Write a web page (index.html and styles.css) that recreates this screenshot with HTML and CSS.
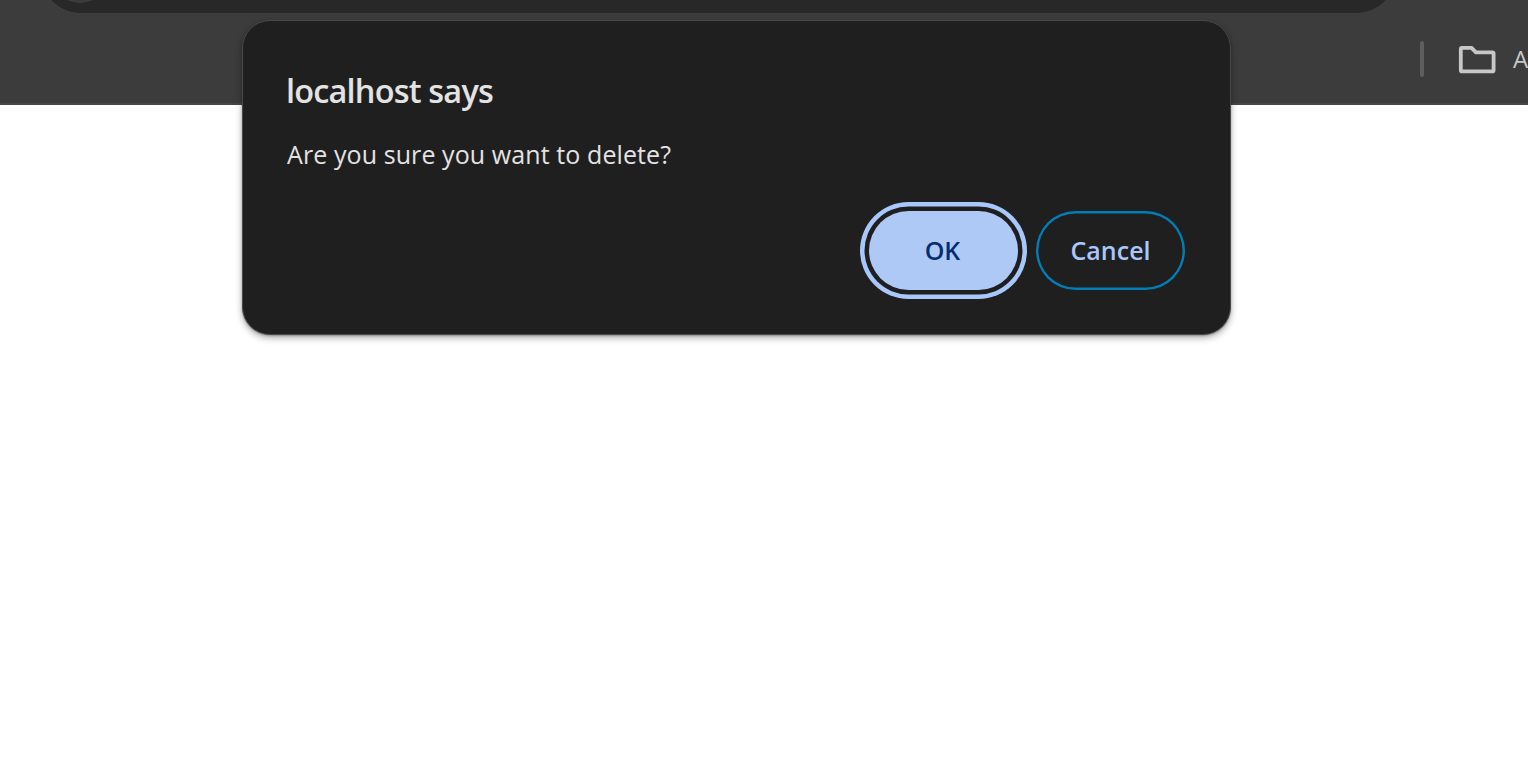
FILE: index.html
```html
<!DOCTYPE html>
<html lang="en">
<head>
<meta charset="utf-8">
<title>localhost</title>
<link rel="stylesheet" href="styles.css">
</head>
<body>
<header class="toolbar">
  <div class="omnibox"><span class="site-info"></span></div>
  <div class="bookmarks">
    <span class="divider"></span>
    <svg class="folder" width="38" height="28" viewBox="0 0 38 28" fill="none" stroke="#c7c7c7" stroke-width="3.8" stroke-linejoin="round"><path d="M4 1.8H13.5L18 6.4H34.4Q35.6 6.4 35.6 7.6V24.2Q35.6 25.4 34.4 25.4H4Q2.8 25.4 2.8 24.2V3Q2.8 1.8 4 1.8Z"/></svg>
    <span class="bookmark-label">A</span>
  </div>
</header>
<section class="dialog" role="dialog">
  <h1 class="title">localhost says</h1>
  <p class="message">Are you sure you want to delete?</p>
  <div class="actions">
    <button class="button ok">OK</button>
    <button class="button cancel">Cancel</button>
  </div>
</section>
</body>
</html>
```
FILE: styles.css
```css
* { box-sizing: border-box; }
body {
  margin: 0;
  height: 780px;
  overflow: hidden;
  background: #fff;
  font-family: "Open Sans", "Noto Sans", sans-serif;
}
.toolbar {
  height: 105px;
  background: #3c3c3c;
  border-bottom: 2px solid #474546;
  overflow: hidden;
}
.omnibox {
  width: 1353px;
  height: 76px;
  margin: -63px 0 0 42px;
  padding: 10px;
  border-radius: 38px;
  background: #282828;
}
.site-info {
  display: block;
  width: 56px;
  height: 56px;
  border-radius: 50%;
  background: #3c3c3c;
}
.bookmarks {
  display: flex;
  align-items: center;
  height: 92px;
  padding-left: 1420px;
}
.divider {
  flex: none;
  width: 4px;
  height: 36px;
  border-radius: 2px;
  background: #5e5e5e;
}
.folder { flex: none; margin: 2px 0 0 34px; }
.bookmark-label {
  margin: 0 0 0 17px;
  font-size: 24px;
  line-height: 32px;
  color: #c7c7c7;
}
.dialog {
  position: absolute;
  left: 242px;
  top: 20px;
  width: 989px;
  height: 315px;
  padding: 48px 45px 0 43px;
  border: 1px solid #4a4a4a;
  border-radius: 28px;
  background: #1f1f1f;
  box-shadow: 0 3px 7px rgba(0, 0, 0, .32), 0 1px 2px rgba(0, 0, 0, .25);
  color: #e3e3e3;
}
.title {
  margin: 0;
  font-size: 32.5px;
  line-height: 44px;
  font-weight: 600;
  letter-spacing: -.82px;
}
.message {
  margin: 23px 0 0 1px;
  font-size: 25px;
  line-height: 36px;
  letter-spacing: .09px;
}
.actions {
  display: flex;
  justify-content: flex-end;
  gap: 18px;
  margin-top: 39px;
}
.button {
  width: 149px;
  height: 79px;
  padding: 0 0 2px;
  border: 0;
  border-radius: 40px;
  font: 600 25px/36px "Open Sans", "Noto Sans", sans-serif;
}
.ok {
  padding-right: 2px;
  background: #afc9f7;
  color: #062e6f;
  box-shadow: 0 0 0 4.5px #1f1f1f, 0 0 0 9px #a8c7fa;
}
.cancel {
  background: transparent;
  box-shadow: inset 0 0 0 2.4px #047db7;
  color: #a8c7fa;
}
```
